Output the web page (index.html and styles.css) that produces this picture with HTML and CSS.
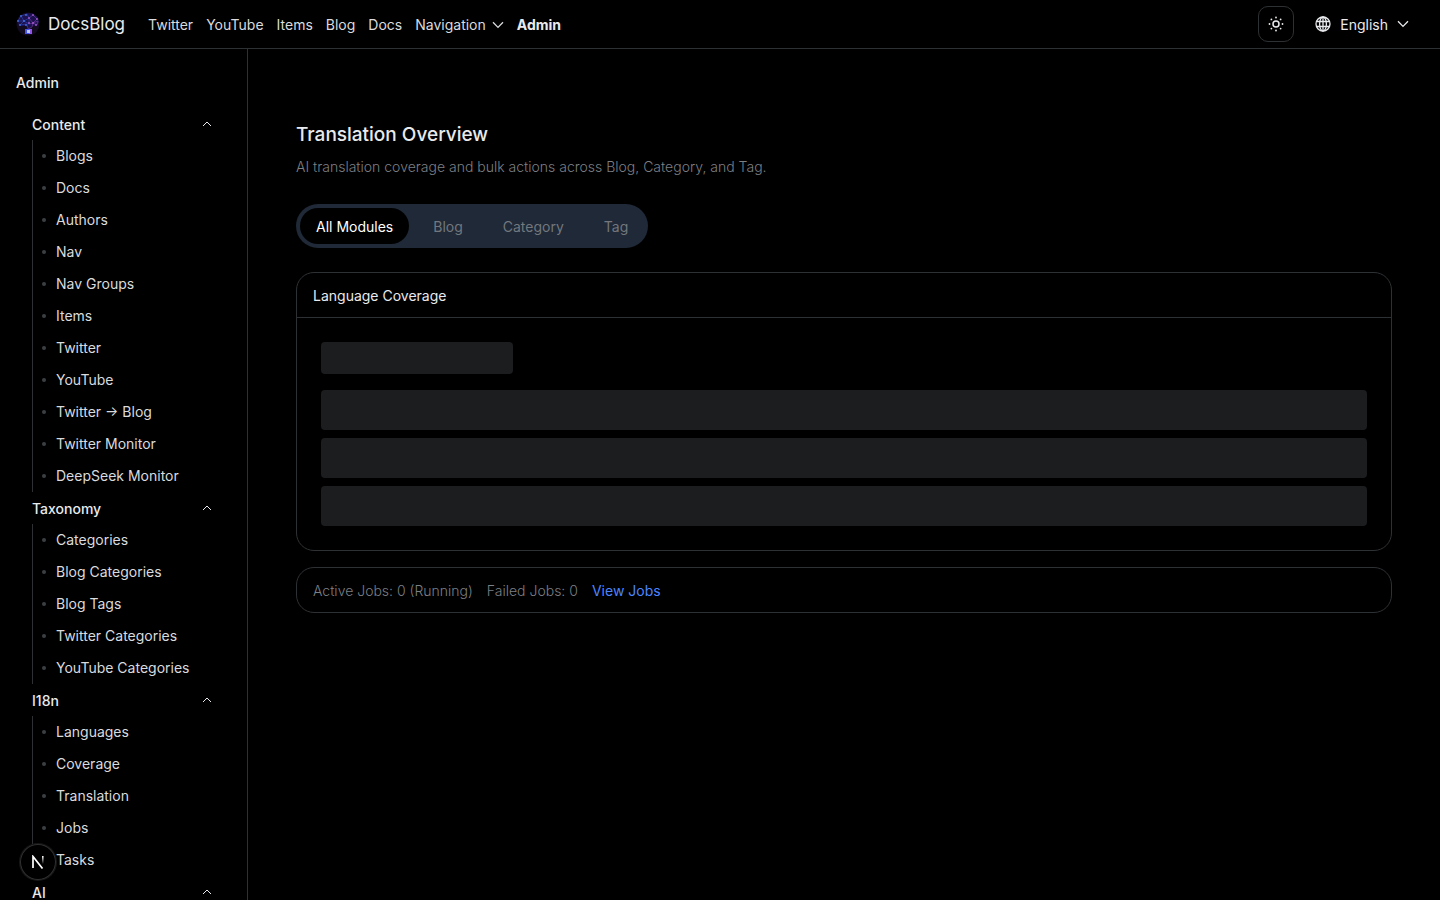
FILE: index.html
```html
<!DOCTYPE html>
<html lang="en">
<head>
<meta charset="utf-8">
<meta name="viewport" content="width=device-width, initial-scale=1">
<title>Translation Overview - DocsBlog</title>
<link rel="stylesheet" href="styles.css">
</head>
<body>
<svg class="sprite" aria-hidden="true">
  <symbol id="down" viewBox="0 0 12 8"><path d="M1 1.2 6 6.4 11 1.2" fill="none" stroke="currentColor" stroke-width="1.3"/></symbol>
  <symbol id="up" viewBox="0 0 10 6"><path d="M1 5 5 1 9 5" fill="none" stroke="currentColor" stroke-width="1"/></symbol>
</svg>
<header class="topbar">
  <a class="brand" href="#">
    <svg class="logo" viewBox="0 0 24 24" aria-hidden="true">
      <circle cx="12" cy="12" r="11.5" fill="#120a1f"/>
      <path d="M3 14 1 9 4.500 3.500 11 1l6 .5 5 4 1 5-2.500 3-5 .5-3 3-3-3z" fill="#1d1250"/>
      <path d="M2 9 5 4l6-2 2 4-5 3zM5 4l3 5-4 4 7-1 1 5M8 9l5 3V6" fill="none" stroke="#2b40a8" stroke-width=".7"/>
      <path d="m13 6 4-3 4 4-4 4-4-5Zm0 6 4-1 4 2 1-4-5 2-1 4-4 2" fill="none" stroke="#6b379c" stroke-width=".7"/>
      <g fill="#4470e0"><circle cx="2" cy="9" r=".9"/><circle cx="5" cy="4" r=".9"/><circle cx="8" cy="9" r="1"/><circle cx="4" cy="13" r=".9"/><circle cx="10" cy="3" r=".9"/><circle cx="10" cy="13" r=".9"/></g>
      <g fill="#a35acd"><circle cx="13" cy="6" r=".9"/><circle cx="17" cy="3" r=".9"/><circle cx="21" cy="7" r=".9"/><circle cx="17" cy="11" r="1"/><circle cx="20" cy="13" r=".9"/><circle cx="13" cy="11" r=".9"/></g>
      <path d="M9 17h7v5H9z" fill="#4353ee"/><path d="M13 17h3v5h-3z" fill="#9353e8"/><path d="M11 18h3v3h-3z" fill="#b9ccff"/>
    </svg>
    <span>DocsBlog</span>
  </a>
  <nav class="mainnav" aria-label="Main">
    <a href="#">Twitter</a><a href="#">YouTube</a><a href="#">Items</a><a href="#">Blog</a><a href="#">Docs</a>
    <button type="button">Navigation <svg class="chevron" aria-hidden="true"><use href="#down"/></svg></button>
    <a class="current" href="#">Admin</a>
  </nav>
  <div class="tools">
    <button class="theme" type="button" aria-label="Toggle theme">
      <svg viewBox="0 0 16 16" aria-hidden="true"><circle cx="8" cy="8" r="3" fill="none" stroke="currentColor" stroke-width="1.5"/><g fill="currentColor"><circle cx="8" cy="1.500" r=".9"/><circle cx="8" cy="14.500" r=".9"/><circle cx="1.500" cy="8" r=".9"/><circle cx="14.500" cy="8" r=".9"/><circle cx="3.400" cy="3.400" r=".9"/><circle cx="12.600" cy="3.400" r=".9"/><circle cx="3.400" cy="12.600" r=".9"/><circle cx="12.600" cy="12.600" r=".9"/></g></svg>
    </button>
    <button class="language" type="button">
      <svg class="globe" viewBox="0 0 16 16" fill="none" stroke="currentColor" stroke-width="1.300" aria-hidden="true"><circle cx="8" cy="8" r="7"/><ellipse cx="8" cy="8" rx="3.400" ry="7"/><path d="M8 1v14M1.500 5.500h13M1.500 10.500h13"/></svg>
      <span>English</span>
      <svg class="chevron" aria-hidden="true"><use href="#down"/></svg>
    </button>
  </div>
</header>
<div class="shell">
  <aside class="sidebar">
    <h2 class="side-title">Admin</h2>
    <nav aria-label="Admin">
      <button class="group" type="button"><span>Content</span><svg aria-hidden="true"><use href="#up"/></svg></button>
      <ul class="links">
        <li><a href="#">Blogs</a></li><li><a href="#">Docs</a></li><li><a href="#">Authors</a></li><li><a href="#">Nav</a></li><li><a href="#">Nav Groups</a></li><li><a href="#">Items</a></li><li><a href="#">Twitter</a></li><li><a href="#">YouTube</a></li><li><a href="#">Twitter → Blog</a></li><li><a href="#">Twitter Monitor</a></li><li><a href="#">DeepSeek Monitor</a></li>
      </ul>
      <button class="group" type="button"><span>Taxonomy</span><svg aria-hidden="true"><use href="#up"/></svg></button>
      <ul class="links">
        <li><a href="#">Categories</a></li><li><a href="#">Blog Categories</a></li><li><a href="#">Blog Tags</a></li><li><a href="#">Twitter Categories</a></li><li><a href="#">YouTube Categories</a></li>
      </ul>
      <button class="group" type="button"><span>I18n</span><svg aria-hidden="true"><use href="#up"/></svg></button>
      <ul class="links">
        <li><a href="#">Languages</a></li><li><a href="#">Coverage</a></li><li><a href="#">Translation</a></li><li><a href="#">Jobs</a></li><li><a href="#">Tasks</a></li>
      </ul>
      <button class="group" type="button"><span>AI</span><svg aria-hidden="true"><use href="#up"/></svg></button>
    </nav>
  </aside>
  <main class="content">
    <header class="intro">
      <h1>Translation Overview</h1>
      <p>AI translation coverage and bulk actions across Blog, Category, and Tag.</p>
    </header>
    <div class="tabs" role="tablist">
      <button type="button" role="tab" aria-selected="true">All Modules</button>
      <button type="button" role="tab" aria-selected="false">Blog</button>
      <button type="button" role="tab" aria-selected="false">Category</button>
      <button type="button" role="tab" aria-selected="false">Tag</button>
    </div>
    <div class="cards">
      <section class="card">
        <h2>Language Coverage</h2>
        <div class="skeleton" aria-busy="true">
          <div class="bone short"></div>
          <div class="bone"></div><div class="bone"></div><div class="bone"></div>
        </div>
      </section>
      <section class="card jobs">
        <span>Active Jobs: 0 (Running)</span><span>Failed Jobs: 0</span><a href="#">View Jobs</a>
      </section>
    </div>
  </main>
</div>
<button class="devtools" type="button" aria-label="Open developer tools">
  <svg viewBox="0 0 14 14" fill="none" aria-hidden="true"><defs><linearGradient id="fade" x1="0" y1="0" x2="0" y2="1"><stop stop-color="#fff"/><stop offset="1" stop-color="#fff" stop-opacity="0"/></linearGradient></defs><path d="M2 13V1.500L11.500 13.500" stroke="#fff" stroke-width="1.700"/><path d="M11 1h1.600v8H11z" fill="url(#fade)"/></svg>
</button>
</body>
</html>
```
FILE: styles.css
```css
:root {
  --line: #2e3134;
  --text: #e8eaed;
  --muted: #7c7f84;
}
* { box-sizing: border-box; }
body {
  margin: 0;
  background: #000;
  color: var(--text);
  font: 300 14px/20px Inter, "Noto Sans", sans-serif;
}
h1, h2, p, ul { margin: 0; padding: 0; }
ul { list-style: none; }
a { color: inherit; text-decoration: none; }
button {
  margin: 0;
  padding: 0;
  border: 0;
  background: none;
  color: inherit;
  font: inherit;
  cursor: pointer;
}
.sprite { display: none; }
.topbar {
  display: flex;
  align-items: center;
  gap: 23px;
  height: 49px;
  padding: 0 16px;
  border-bottom: 1px solid var(--line);
}
.brand {
  display: flex;
  align-items: center;
  gap: 8px;
  font-size: 17px;
  font-weight: 400;
}
.logo { width: 24px; height: 24px; }
.mainnav {
  display: flex;
  align-items: center;
  gap: 13px;
  padding-top: 1px;
  color: #d9dbde;
  font-weight: 400;
}
.mainnav button { display: flex; align-items: center; gap: 6px; }
.mainnav .current { color: var(--text); font-weight: 700; }
.chevron { width: 12px; height: 8px; }
.tools { display: flex; align-items: center; gap: 21px; margin-left: auto; }
.theme {
  display: grid;
  place-items: center;
  width: 36px;
  height: 36px;
  border: 1px solid var(--line);
  border-radius: 10px;
}
.theme svg, .globe { width: 16px; height: 16px; }
.language {
  display: flex;
  align-items: center;
  gap: 9px;
  padding-right: 15px;
  font-weight: 400;
}
.language span { padding-top: 1px; }
.shell { display: flex; height: calc(100vh - 49px); }
.sidebar {
  flex: 0 0 248px;
  padding: 24px 32px 0 16px;
  border-right: 1px solid var(--line);
  overflow-y: auto;
  scrollbar-width: none;
}
.side-title { margin-bottom: 15px; font-size: 14px; font-weight: 500; }
.sidebar nav { padding-left: 16px; }
.group {
  display: flex;
  align-items: center;
  justify-content: space-between;
  width: 100%;
  height: 32px;
  padding-right: 3px;
  font-weight: 500;
}
.group span { padding-top: 2px; }
.group svg { width: 10px; height: 6px; }
.links { border-left: 1px solid var(--line); color: #d9dbde; }
.links a {
  display: flex;
  align-items: center;
  gap: 10px;
  height: 32px;
  padding-left: 9px;
  font-weight: 400;
}
.links a::before {
  content: "";
  width: 4px;
  height: 4px;
  border-radius: 50%;
  background: #3d4043;
}
.content { flex: 1; min-width: 0; padding: 72px 48px 0; overflow-y: auto; }
.intro { display: grid; gap: 8px; margin-bottom: 27px; }
.intro h1 { font-size: 19px; line-height: 28px; font-weight: 500; }
.intro p { color: var(--muted); }
.tabs {
  display: inline-flex;
  padding: 4px;
  gap: 8px;
  margin-bottom: 24px;
  border-radius: 22px;
  background: #1f2937;
  vertical-align: top;
}
.tabs button {
  height: 36px;
  padding: 1px 16px 0;
  border-radius: 18px;
  color: #73777d;
  font-weight: 400;
}
.tabs [aria-selected="true"] { background: #000; color: #fff; }
.cards { display: grid; gap: 16px; }
.card { border: 1px solid var(--line); border-radius: 18px; }
.card h2 {
  padding: 13px 16px 11px;
  border-bottom: 1px solid var(--line);
  font-size: 14px;
  font-weight: 400;
}
.skeleton { display: grid; gap: 8px; padding: 24px; }
.bone { height: 40px; border-radius: 4px; background: #1c1d1f; }
.bone.short { width: 192px; height: 32px; margin-bottom: 8px; }
.jobs { display: flex; gap: 14px; padding: 13px 16px 11px; color: var(--muted); }
.jobs a { color: #4c84ff; font-weight: 400; }
.devtools {
  position: fixed;
  left: 20px;
  bottom: 20px;
  display: grid;
  place-items: center;
  width: 36px;
  height: 36px;
  border-radius: 50%;
  background: #000;
  box-shadow: 0 0 0 1px #171717, inset 0 0 0 1px #303030;
}
.devtools svg { width: 14px; height: 14px; }
```
